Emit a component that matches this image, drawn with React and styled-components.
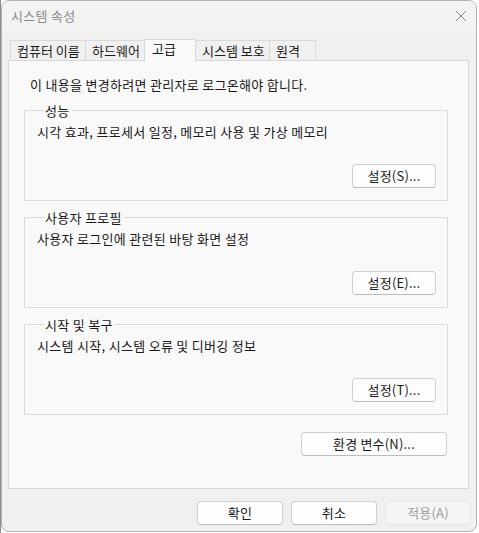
import React from "react";
import styled, { createGlobalStyle } from "styled-components";

const Global = createGlobalStyle`
  html, body { margin: 0; padding: 0; }
  body {
    width: 479px;
    height: 533px;
    overflow: hidden;
    background: linear-gradient(90deg, #8c8c8c 0 1px, #ffffff 1px);
    font-family: "Noto Sans CJK KR", "Noto Sans", sans-serif;
    font-size: 13px;
    letter-spacing: 0.3px;
    color: #1a1a1a;
  }
`;

const Window = styled.div`
  box-sizing: border-box;
  margin-left: 1px;
  width: 476px;
  height: 532px;
  border: 1px solid #b4b4b4;
  border-radius: 8px;
  background: #f0f0f0;
  overflow: hidden;
  display: flex;
  flex-direction: column;
`;

const TitleBar = styled.div`
  height: 30px;
  flex: none;
  display: flex;
  align-items: center;
  justify-content: space-between;
  padding: 0 8px 0 9px;
  background: #f3f3f3;
`;

const Title = styled.span`
  color: #8a8a8a;
  line-height: 16px;
`;

const Close = styled.svg`
  width: 12px;
  height: 12px;
  margin-right: 1px;
`;

const Body = styled.div`
  flex: 1;
  display: flex;
  flex-direction: column;
  padding: 8px 7px 0 6px;
`;

const TabRow = styled.div`
  display: flex;
  align-items: flex-end;
  height: 22px;
  padding-left: 2px;
  position: relative;
  z-index: 1;
  margin-bottom: -1px;
`;

const Tab = styled.div`
  box-sizing: border-box;
  width: ${(p) => p.$w}px;
  height: ${(p) => (p.$active ? 23 : 21)}px;
  margin-left: ${(p) => (p.$first ? 0 : -1)}px;
  border: 1px solid #d9d9d9;
  border-bottom: ${(p) => (p.$active ? "none" : "1px solid #d9d9d9")};
  background: ${(p) => (p.$active ? "#f9f9f9" : "#f0f0f0")};
  position: relative;
  z-index: ${(p) => (p.$active ? 2 : 1)};
  padding: ${(p) => (p.$active ? "0 0 0 7px" : "1px 0 0 6px")};
  margin-bottom: ${(p) => (p.$active ? -1 : 0)}px;
  line-height: 17px;
  white-space: nowrap;
  letter-spacing: 0;
`;

const Panel = styled.div`
  box-sizing: border-box;
  height: 429px;
  border: 1px solid #d9d9d9;
  background: #f9f9f9;
  padding: 15px 20px 0 15px;
  display: flex;
  flex-direction: column;
`;

const Notice = styled.div`
  line-height: 17px;
  padding-left: 6px;
  margin-bottom: 9px;
`;

const Group = styled.fieldset`
  margin: 0 0 8px 0;
  padding: 4px 11px 12px 12px;
  border: 1px solid #dcdcdc;
  min-width: 0;
  display: flex;
  flex-direction: column;
`;

const Legend = styled.legend`
  margin-left: 7px;
  padding: 0 2px 0 1px;
  line-height: 17px;
`;

const Desc = styled.div`
  line-height: 17px;
  height: 17px;
  margin-bottom: 24px;
`;

const Button = styled.button`
  box-sizing: border-box;
  width: ${(p) => p.$w || 84}px;
  height: 24px;
  align-self: flex-end;
  border: 1px solid ${(p) => (p.disabled ? "#e8e8e8" : "#d0d0d0")};
  border-bottom-color: ${(p) => (p.disabled ? "#e5e5e5" : "#bcbcbc")};
  border-radius: 4px;
  background: ${(p) => (p.disabled ? "#f5f5f5" : "#fdfdfd")};
  color: ${(p) => (p.disabled ? "#9d9d9d" : "#1a1a1a")};
  font-family: "Noto Sans CJK KR", "Noto Sans", sans-serif;
  font-size: 13px;
  letter-spacing: 0.2px;
  line-height: 16px;
  padding: 0;
  text-align: center;
`;

const EnvRow = styled.div`
  display: flex;
  justify-content: flex-end;
  margin-top: 9px;
  padding-right: 1px;
`;

const Footer = styled.div`
  display: flex;
  justify-content: flex-end;
  gap: 8px;
  margin-top: 12px;
  margin-right: -2px;
`;

export default function App() {
  const tabs = [
    { label: "컴퓨터 이름", w: 76 },
    { label: "하드웨어", w: 60 },
    { label: "고급", w: 52, active: true },
    { label: "시스템 보호", w: 75 },
    { label: "원격", w: 47 },
  ];
  const groups = [
    { title: "성능", desc: "시각 효과, 프로세서 일정, 메모리 사용 및 가상 메모리", btn: "설정(S)..." },
    { title: "사용자 프로필", desc: "사용자 로그인에 관련된 바탕 화면 설정", btn: "설정(E)..." },
    { title: "시작 및 복구", desc: "시스템 시작, 시스템 오류 및 디버깅 정보", btn: "설정(T)..." },
  ];
  return (
    <>
      <Global />
      <Window>
        <TitleBar>
          <Title>시스템 속성</Title>
          <Close viewBox="0 0 12 12">
            <path d="M1 1 L11 11 M11 1 L1 11" stroke="#8a8a8a" strokeWidth="1" fill="none" />
          </Close>
        </TitleBar>
        <Body>
          <TabRow>
            {tabs.map((t, i) => (
              <Tab key={t.label} $w={t.w} $active={t.active} $first={i === 0}>
                {t.label}
              </Tab>
            ))}
          </TabRow>
          <Panel>
            <Notice>이 내용을 변경하려면 관리자로 로그온해야 합니다.</Notice>
            {groups.map((g) => (
              <Group key={g.title}>
                <Legend>{g.title}</Legend>
                <Desc>{g.desc}</Desc>
                <Button>{g.btn}</Button>
              </Group>
            ))}
            <EnvRow>
              <Button $w={146}>환경 변수(N)...</Button>
            </EnvRow>
          </Panel>
          <Footer>
            <Button $w={86}>확인</Button>
            <Button $w={86}>취소</Button>
            <Button $w={86} disabled>적용(A)</Button>
          </Footer>
        </Body>
      </Window>
    </>
  );
}
